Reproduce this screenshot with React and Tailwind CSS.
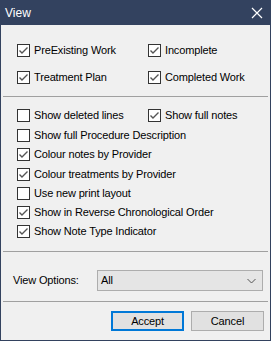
import { useState } from "react";

const Check = ({ checked }) => (
    <span className="w-[13px] h-[13px] border border-[#333333] bg-white flex items-center justify-center shrink-0">
        {checked && (
            <svg width="11" height="11" viewBox="0 0 11 11">
                <path d="M1.5 5.5 L4 8 L9.5 2.5" fill="none" stroke="#555555" strokeWidth="1.4" />
            </svg>
        )}
    </span>
);

const Option = ({ label, checked, className = "" }) => (
    <div className={`flex items-center gap-[4px] ${className}`}>
        <Check checked={checked} />
        <span className="leading-none whitespace-nowrap">{label}</span>
    </div>
);

export default function App() {
    const [opts] = useState({
        preExisting: true, incomplete: true, treatment: true, completed: true,
        deleted: false, fullNotes: true, fullProc: false, colourNotes: true,
        colourTreat: true, newPrint: false, reverse: true, noteType: true,
    });

    return (
        <div className="w-[271px] h-[341px] bg-[#33425f] flex flex-col text-[11px] tracking-[-0.15px] text-black font-['Liberation_Sans',Arial,sans-serif]">
            {/* Title bar */}
            <div className="h-[25px] flex items-center justify-between pl-[5px] pr-[8px] text-white shrink-0">
                <span className="text-[12px] tracking-normal">View</span>
                <svg width="12" height="12" viewBox="0 0 12 12">
                    <path d="M1 1 L11 11 M11 1 L1 11" stroke="#ffffff" strokeWidth="1.2" />
                </svg>
            </div>

            <div className="flex-1 mx-[1px] mb-[1px] bg-[#f0f0f0] flex flex-col">
                {/* Main filters */}
                <div className="grid grid-cols-[131px_1fr] pl-[16px] pt-[19px] gap-y-[14px]">
                    <Option label="PreExisting Work" checked={opts.preExisting} className="h-[13px]" />
                    <Option label="Incomplete" checked={opts.incomplete} className="h-[13px]" />
                    <Option label="Treatment Plan" checked={opts.treatment} className="h-[13px]" />
                    <Option label="Completed Work" checked={opts.completed} className="h-[13px]" />
                </div>

                <div className="mx-[2px] mt-[12px] h-[1px] bg-[#a0a0a0]" />

                {/* Display options */}
                <div className="flex flex-col pl-[16px] pt-[9px]">
                    <div className="grid grid-cols-[131px_1fr] h-[19px] items-center">
                        <Option label="Show deleted lines" checked={opts.deleted} />
                        <Option label="Show full notes" checked={opts.fullNotes} />
                    </div>
                    <Option label="Show full Procedure Description" checked={opts.fullProc} className="h-[20px]" />
                    <Option label="Colour notes by Provider" checked={opts.colourNotes} className="h-[19px]" />
                    <Option label="Colour treatments by Provider" checked={opts.colourTreat} className="h-[20px]" />
                    <Option label="Use new print layout" checked={opts.newPrint} className="h-[19px]" />
                    <Option label="Show in Reverse Chronological Order" checked={opts.reverse} className="h-[19px]" />
                    <Option label="Show Note Type Indicator" checked={opts.noteType} className="h-[19px]" />
                </div>

                <div className="mx-[2px] mt-[10px] h-[1px] bg-[#a0a0a0]" />

                {/* View options */}
                <div className="flex items-center pl-[12px] pr-[7px] mt-[18px] h-[21px]">
                    <span className="w-[84px]">View Options:</span>
                    <div className="flex-1 h-[21px] border border-[#adadad] bg-[#e5e5e5] flex items-center justify-between pl-[3px] pr-[6px]">
                        <span>All</span>
                        <svg width="9" height="6" viewBox="0 0 9 6">
                            <path d="M0.5 1 L4.5 5 L8.5 1" fill="none" stroke="#555555" strokeWidth="1" />
                        </svg>
                    </div>
                </div>

                <div className="mx-[2px] mt-[10px] h-[1px] bg-[#a0a0a0]" />

                {/* Buttons */}
                <div className="flex justify-end gap-[7px] pr-[6px] mt-[9px]">
                    <button className="w-[73px] h-[20px] border-2 border-[#0078d7] bg-[#e1e1e1] text-[11px]">Accept</button>
                    <button className="w-[73px] h-[20px] border border-[#adadad] bg-[#e1e1e1] text-[11px]">Cancel</button>
                </div>
            </div>
        </div>
    );
}
